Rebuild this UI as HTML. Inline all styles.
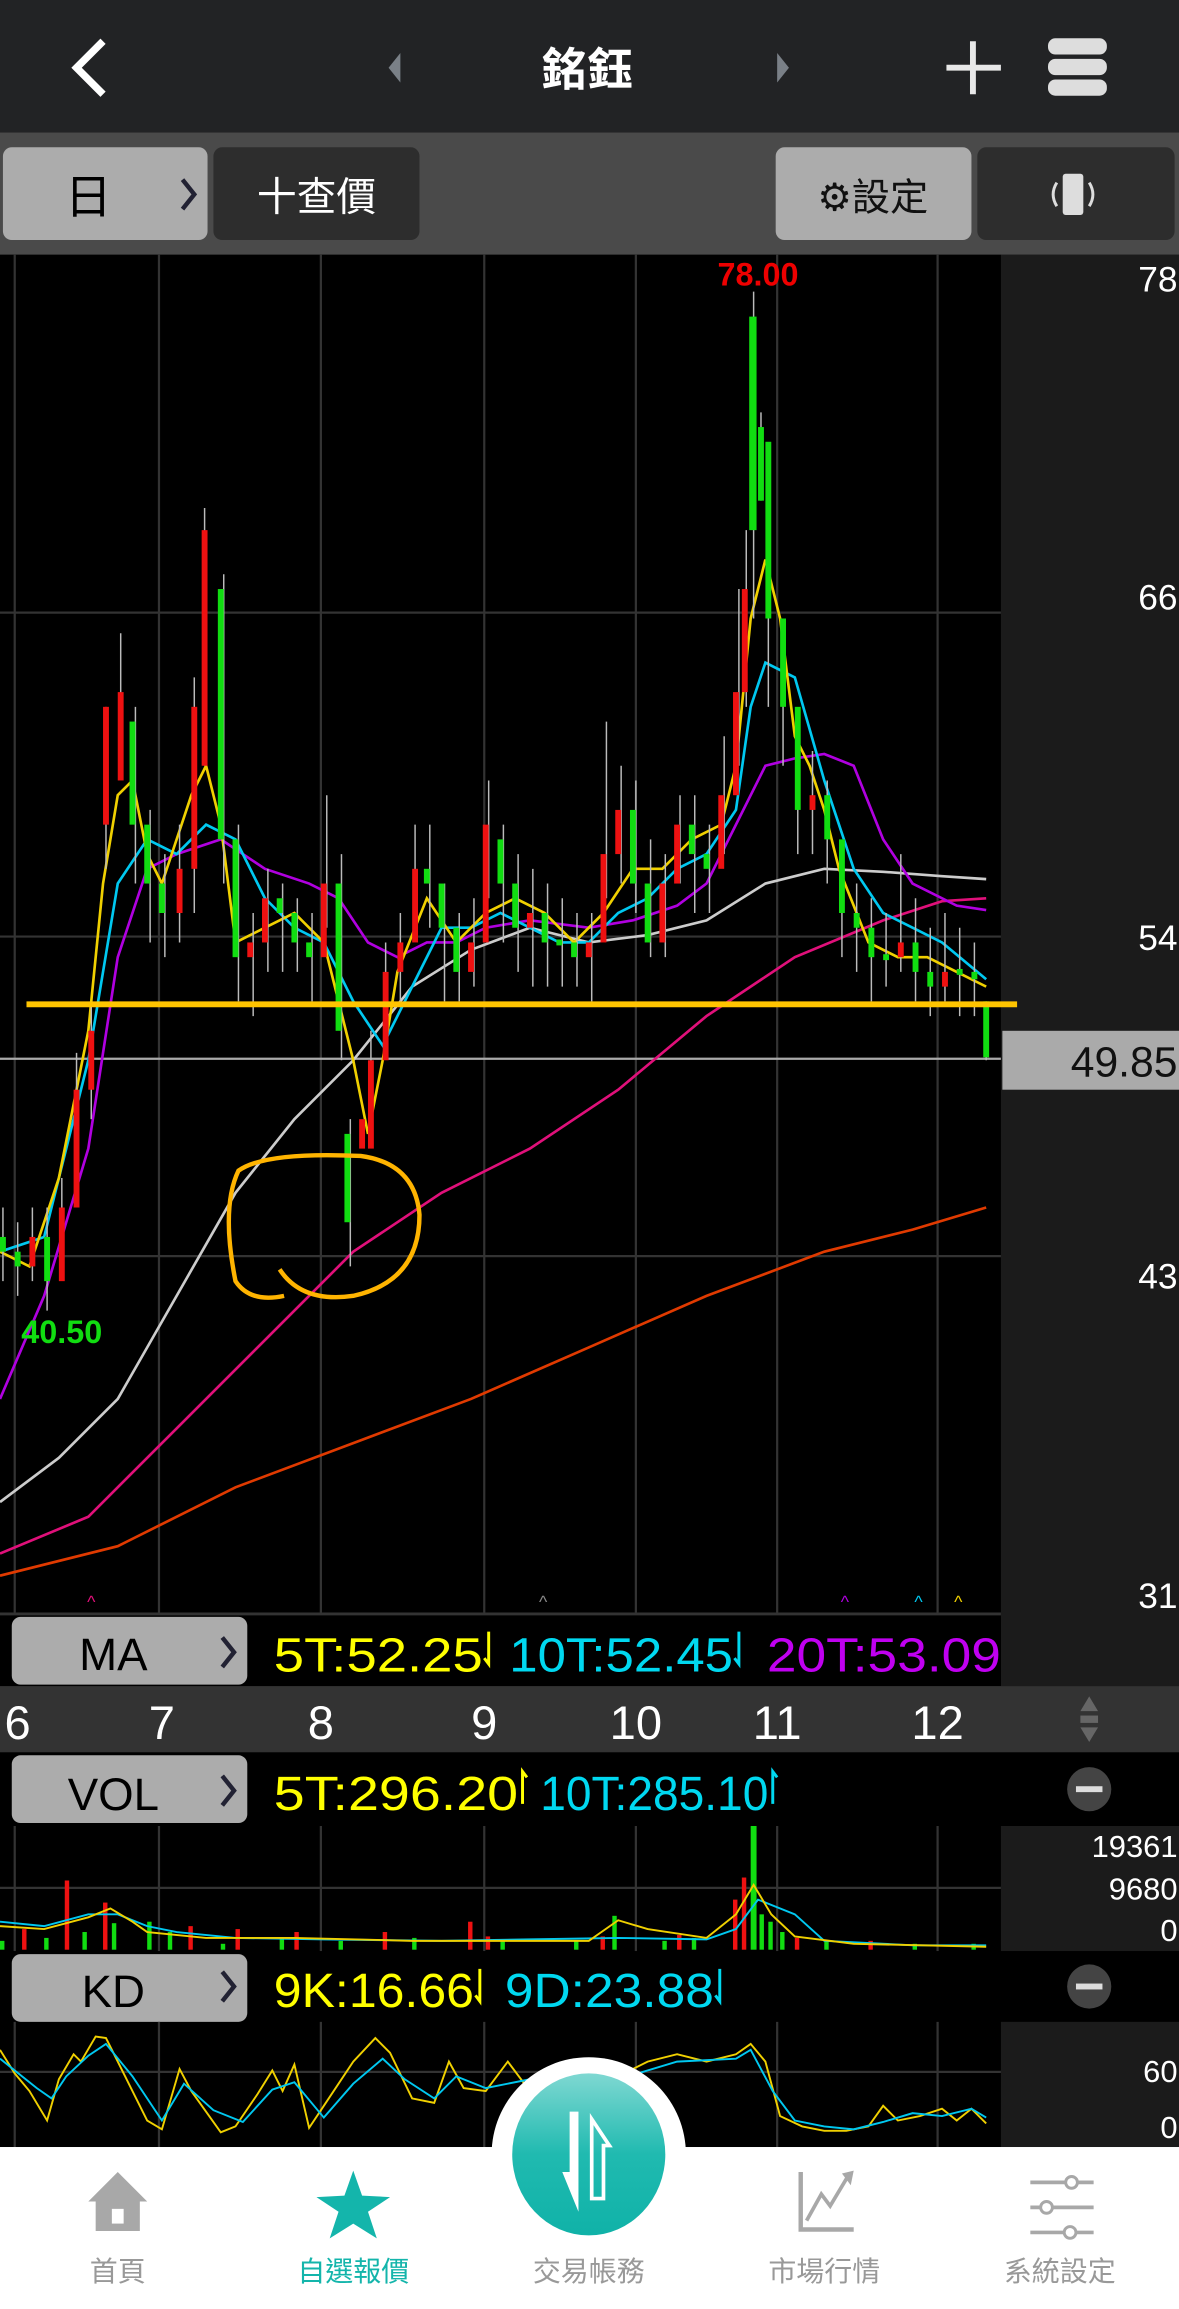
<!DOCTYPE html>
<html><head><meta charset="utf-8"><style>
html,body{margin:0;padding:0;background:#000;}
svg{display:block;}
text{font-family:"Liberation Sans","Noto Sans CJK TC",sans-serif;}
</style></head><body>
<svg width="1179" height="2309" viewBox="0 0 801 1568" preserveAspectRatio="none" xmlns="http://www.w3.org/2000/svg">
<!-- header -->
<rect x="0" y="0" width="801" height="90" fill="#222325"/>
<path d="M70 28 L52 46 L70 64" stroke="#fff" stroke-width="5" fill="none"/>
<path d="M272 36 L264 46 L272 56Z" fill="#7a8087"/>
<path d="M528 36 L536 46 L528 56Z" fill="#7a8087"/>
<text x="399" y="58" font-size="31" font-weight="bold" fill="#fff" text-anchor="middle">銘鈺</text>
<path d="M661 28 V64 M643 46 H680" stroke="#e8e8e8" stroke-width="4"/>
<rect x="712" y="26" width="40" height="11" rx="5" fill="#ddd"/>
<rect x="712" y="40" width="40" height="11" rx="5" fill="#ddd"/>
<rect x="712" y="54" width="40" height="11" rx="5" fill="#ddd"/>
<!-- toolbar -->
<rect x="0" y="90" width="801" height="83" fill="#4a4a4a"/>
<rect x="2" y="100" width="139" height="63" rx="6" fill="#acacac"/>
<text x="60" y="145" font-size="32" fill="#000" text-anchor="middle">日</text>
<path d="M124 122 L132 132 L124 142" stroke="#223" stroke-width="3" fill="none"/>
<rect x="145" y="100" width="140" height="63" rx="6" fill="#2d2d2d"/>
<text x="215" y="143" font-size="27" fill="#fff" text-anchor="middle">十查價</text>
<rect x="527" y="100" width="133" height="63" rx="6" fill="#acacac"/>
<text x="593" y="143" font-size="26" fill="#111" text-anchor="middle">⚙設定</text>
<rect x="664" y="100" width="134" height="63" rx="6" fill="#2d2d2d"/>
<rect x="722" y="118" width="14" height="28" rx="2" fill="#ddd"/>
<path d="M718 124 Q713 132 718 140 M740 124 Q745 132 740 140" stroke="#ddd" stroke-width="2" fill="none"/>
<!-- chart bg -->
<rect x="0" y="173" width="680" height="922" fill="#000"/>
<rect x="680" y="173" width="121" height="972" fill="#1b1b1b"/>
<g stroke="#333" stroke-width="1.5">
<path d="M10 173V1095 M108 173V1095 M218 173V1095 M329 173V1095 M432 173V1095 M528 173V1095 M637 173V1095"/>
<path d="M0 416H680 M0 636H680 M0 853H680"/>
</g>
<g fill="#fff" font-size="24" text-anchor="end">
<text x="800" y="198">78</text><text x="800" y="414">66</text><text x="800" y="645">54</text><text x="800" y="875">43</text><text x="800" y="1092">31</text>
</g>
<line x1="0" y1="719" x2="680" y2="719" stroke="#aaa" stroke-width="1.5"/>
<rect x="681" y="700" width="120" height="40" fill="#aaa"/>
<text x="800" y="731" font-size="29" fill="#111" text-anchor="end">49.85</text>
<!-- MAs -->
<g fill="none" stroke-width="1.8">
<polyline stroke="#e03a00" points="0,1070 80,1050 160,1010 240,980 320,950 400,915 480,880 560,850 620,835 670,820"/>
<polyline stroke="#e0107a" points="0,1055 60,1030 120,970 180,910 240,850 300,810 360,780 420,740 480,690 540,650 600,625 640,612 670,610"/>
<polyline stroke="#ccc" points="0,1020 40,990 80,950 120,880 160,810 200,760 240,720 280,670 320,645 360,630 400,640 440,635 480,625 520,600 560,590 600,592 640,595 670,597"/>
<polyline stroke="#b000e0" points="0,950 30,880 60,780 80,650 100,590 120,580 150,570 180,590 210,600 230,610 250,640 270,650 290,640 310,640 330,630 360,625 400,630 430,625 460,615 480,600 500,560 520,520 540,515 560,512 580,520 600,570 620,600 650,615 670,618"/>
<polyline stroke="#00c8f0" points="0,850 30,840 50,760 60,720 80,600 100,570 120,580 140,560 160,570 180,610 200,630 220,640 240,680 260,710 280,670 300,630 320,630 340,620 360,630 380,640 400,640 420,620 440,610 460,590 480,580 500,550 510,480 520,450 540,460 560,530 580,590 600,620 620,630 640,640 670,665"/>
<polyline stroke="#f0d000" points="0,850 20,860 40,800 60,700 70,600 80,540 90,530 100,580 110,600 120,570 130,540 140,520 150,560 160,640 180,630 200,620 220,640 240,720 250,770 260,720 270,660 290,610 310,640 330,620 350,610 370,620 390,640 410,620 430,590 450,590 470,570 490,560 500,520 510,420 520,380 530,420 540,500 550,520 560,550 570,590 590,640 610,650 630,650 650,660 670,670"/>
</g>
<!-- wicks -->
<path stroke="#bbb" stroke-width="1" d="M2 820V870 M12 830V880 M22 820V870 M32 820V890 M42 800V840 M52 715V760 M62 680V760 M72 480V590 M82 430V520 M92 480V600 M102 550V640 M112 580V650 M122 560V640 M132 460V620 M139 345V520 M152 390V600 M162 560V680 M172 620V690 M182 590V660 M192 600V660 M202 610V660 M212 620V680 M222 540V630 M232 580V720 M238 760V860 M252 700V760 M262 640V690 M272 620V680 M282 560V630 M292 560V630 M302 600V680 M312 620V680 M322 610V670 M332 530V610 M342 560V640 M352 580V660 M362 590V670 M372 600V670 M382 610V670 M392 620V670 M402 620V680 M412 490V610 M422 520V600 M432 530V620 M442 570V650 M452 580V650 M462 540V600 M472 540V620 M482 560V620 M492 500V580 M502 400V520 M507 360V480 M512 198V420 M517 280V340 M522 390V480 M532 450V520 M542 500V580 M552 510V580 M562 530V600 M572 580V650 M582 600V660 M592 610V680 M602 620V670 M612 580V660 M622 610V680 M632 630V690 M642 620V680 M652 630V690 M662 640V690 M670 680V720"/>
<!-- candles green -->
<g fill="#11dd11">
<rect x="0" y="840" width="4" height="10"/><rect x="10" y="850" width="4" height="10"/><rect x="30" y="840" width="4" height="30"/>
<rect x="88" y="490" width="4" height="70"/><rect x="98" y="560" width="4" height="40"/><rect x="108" y="600" width="4" height="20"/>
<rect x="148" y="400" width="4" height="170"/><rect x="158" y="570" width="4" height="80"/><rect x="188" y="610" width="4" height="10"/><rect x="198" y="620" width="4" height="20"/><rect x="208" y="640" width="4" height="10"/>
<rect x="228" y="600" width="4" height="100"/><rect x="234" y="770" width="4" height="60"/><rect x="288" y="590" width="4" height="10"/><rect x="298" y="600" width="4" height="30"/><rect x="308" y="630" width="4" height="30"/>
<rect x="338" y="570" width="4" height="30"/><rect x="348" y="600" width="4" height="30"/><rect x="368" y="620" width="4" height="20"/><rect x="378" y="638" width="4" height="4"/><rect x="388" y="640" width="4" height="10"/>
<rect x="428" y="550" width="4" height="50"/><rect x="438" y="600" width="4" height="40"/><rect x="468" y="560" width="4" height="20"/><rect x="478" y="580" width="4" height="10"/>
<rect x="509" y="215" width="5" height="145"/><rect x="515" y="290" width="4" height="50"/><rect x="520" y="300" width="4" height="120"/><rect x="530" y="420" width="4" height="60"/><rect x="540" y="480" width="4" height="70"/>
<rect x="560" y="540" width="4" height="30"/><rect x="570" y="570" width="4" height="50"/><rect x="580" y="620" width="4" height="10"/><rect x="590" y="630" width="4" height="20"/><rect x="600" y="648" width="4" height="4"/>
<rect x="620" y="640" width="4" height="20"/><rect x="630" y="660" width="4" height="10"/><rect x="650" y="658" width="4" height="4"/><rect x="660" y="660" width="4" height="5"/><rect x="668" y="680" width="4" height="38"/>
</g>
<g fill="#ee1111">
<rect x="20" y="840" width="4" height="20"/><rect x="40" y="820" width="4" height="50"/><rect x="50" y="740" width="4" height="80"/><rect x="60" y="700" width="4" height="40"/>
<rect x="70" y="480" width="4" height="80"/><rect x="80" y="470" width="4" height="60"/><rect x="120" y="590" width="4" height="30"/><rect x="130" y="480" width="4" height="110"/>
<rect x="137" y="360" width="4" height="160"/><rect x="168" y="640" width="4" height="10"/><rect x="178" y="610" width="4" height="30"/><rect x="218" y="600" width="4" height="50"/>
<rect x="244" y="760" width="4" height="20"/><rect x="250" y="720" width="4" height="60"/><rect x="260" y="660" width="4" height="60"/><rect x="270" y="640" width="4" height="20"/><rect x="280" y="590" width="4" height="50"/>
<rect x="318" y="640" width="4" height="20"/><rect x="328" y="560" width="4" height="80"/><rect x="358" y="620" width="4" height="10"/><rect x="398" y="640" width="4" height="10"/>
<rect x="408" y="580" width="4" height="60"/><rect x="418" y="550" width="4" height="30"/><rect x="448" y="600" width="4" height="40"/><rect x="458" y="560" width="4" height="40"/>
<rect x="488" y="540" width="4" height="50"/><rect x="498" y="470" width="4" height="70"/><rect x="504" y="400" width="4" height="70"/><rect x="550" y="540" width="4" height="10"/><rect x="610" y="640" width="4" height="10"/><rect x="640" y="660" width="4" height="10"/>
</g>
<!-- yellow line + circle -->
<line x1="18" y1="682" x2="691" y2="682" stroke="#ffc400" stroke-width="4"/>
<path d="M190 862 Q205 885 240 880 Q285 870 285 825 Q282 790 245 785 Q180 782 162 795 Q150 820 160 870 Q170 885 193 880" stroke="#ffb400" stroke-width="3" fill="none"/>
<text x="515" y="194" font-size="22" font-weight="bold" fill="#e00" text-anchor="middle">78.00</text>
<text x="42" y="912" font-size="22" font-weight="bold" fill="#1d1" text-anchor="middle">40.50</text>
<g font-size="12" text-anchor="middle"><text x="62" y="1092" fill="#e0107a">^</text><text x="369" y="1092" fill="#888">^</text><text x="574" y="1092" fill="#b000e0">^</text><text x="624" y="1092" fill="#00c8f0">^</text><text x="651" y="1092" fill="#f0d000">^</text></g>
<!-- MA row -->
<rect x="0" y="1095" width="680" height="50" fill="#000"/>
<line x1="0" y1="1096" x2="680" y2="1096" stroke="#333" stroke-width="2"/>
<rect x="8" y="1098" width="160" height="46" rx="6" fill="#acacac"/>
<text x="77" y="1134" font-size="31" fill="#000" text-anchor="middle">MA</text>
<path d="M151 1112 L159 1122 L151 1132" stroke="#223" stroke-width="3" fill="none"/>
<g font-size="33" lengthAdjust="spacingAndGlyphs">
<text x="186" y="1135" fill="#ffff00" textLength="142" lengthAdjust="spacingAndGlyphs">5T:52.25</text>
<path d="M332 1108 V1130 L329 1126" stroke="#ffff00" stroke-width="2" fill="none"/>
<text x="346" y="1135" fill="#00d8f0" textLength="152" lengthAdjust="spacingAndGlyphs">10T:52.45</text>
<path d="M502 1108 V1130 L499 1126" stroke="#00d8f0" stroke-width="2" fill="none"/>
<text x="521" y="1135" fill="#c000f0" textLength="159" lengthAdjust="spacingAndGlyphs">20T:53.09</text>
</g>
<!-- date row -->
<rect x="0" y="1145" width="801" height="45" fill="#333"/>
<g fill="#fff" font-size="32" text-anchor="middle"><text x="12" y="1181">6</text><text x="110" y="1181">7</text><text x="218" y="1181">8</text><text x="329" y="1181">9</text><text x="432" y="1181">10</text><text x="528" y="1181">11</text><text x="637" y="1181">12</text></g>
<path d="M734 1162 L740 1152 L746 1162Z M734 1173 L740 1183 L746 1173Z" fill="#666"/><rect x="734" y="1165" width="12" height="5" fill="#666"/>
<!-- VOL row -->
<rect x="0" y="1190" width="801" height="50" fill="#000"/>
<rect x="8" y="1192" width="160" height="46" rx="6" fill="#acacac"/>
<text x="77" y="1229" font-size="31" fill="#000" text-anchor="middle">VOL</text>
<path d="M151 1206 L159 1216 L151 1226" stroke="#223" stroke-width="3" fill="none"/>
<text x="186" y="1229" font-size="33" fill="#ffff00" textLength="166" lengthAdjust="spacingAndGlyphs">5T:296.20</text>
<path d="M355 1225 V1203 L358 1207" stroke="#ffff00" stroke-width="2" fill="none"/>
<text x="367" y="1229" font-size="33" fill="#00d8f0" textLength="155" lengthAdjust="spacingAndGlyphs">10T:285.10</text>
<path d="M525 1225 V1203 L528 1207" stroke="#00d8f0" stroke-width="2" fill="none"/>
<circle cx="740" cy="1215" r="15" fill="#444"/><rect x="731" y="1213" width="18" height="4" fill="#ddd"/>
<!-- VOL chart -->
<rect x="680" y="1240" width="121" height="85" fill="#1b1b1b"/>
<g stroke="#333" stroke-width="1.5"><path d="M10 1240V1325 M108 1240V1325 M218 1240V1325 M329 1240V1325 M432 1240V1325 M528 1240V1325 M637 1240V1325 M0 1282H680"/></g>
<g fill="#fff" font-size="21" text-anchor="end"><text x="800" y="1261">19361</text><text x="800" y="1290">9680</text><text x="800" y="1318">0</text></g>
<g fill="#ee1111"><rect x="44" y="1277" width="3" height="47"/><rect x="70" y="1292" width="3" height="32"/><rect x="15" y="1310" width="3" height="14"/><rect x="128" y="1308" width="3" height="16"/><rect x="160" y="1310" width="3" height="14"/><rect x="200" y="1312" width="3" height="12"/><rect x="260" y="1312" width="3" height="12"/><rect x="318" y="1305" width="3" height="19"/><rect x="330" y="1315" width="3" height="9"/><rect x="408" y="1315" width="3" height="9"/><rect x="460" y="1314" width="3" height="10"/><rect x="498" y="1290" width="3" height="34"/><rect x="504" y="1275" width="3" height="49"/><rect x="540" y="1316" width="3" height="8"/><rect x="590" y="1318" width="3" height="6"/></g>
<g fill="#11dd11"><rect x="0" y="1318" width="3" height="6"/><rect x="30" y="1316" width="3" height="8"/><rect x="56" y="1312" width="3" height="12"/><rect x="76" y="1306" width="3" height="18"/><rect x="100" y="1305" width="3" height="19"/><rect x="114" y="1312" width="3" height="12"/><rect x="150" y="1320" width="3" height="4"/><rect x="190" y="1316" width="3" height="8"/><rect x="230" y="1318" width="3" height="6"/><rect x="280" y="1316" width="3" height="8"/><rect x="340" y="1318" width="3" height="6"/><rect x="390" y="1318" width="3" height="6"/><rect x="416" y="1301" width="3" height="23"/><rect x="450" y="1318" width="3" height="6"/><rect x="470" y="1316" width="3" height="8"/><rect x="510" y="1240" width="4" height="84"/><rect x="516" y="1300" width="3" height="24"/><rect x="522" y="1305" width="3" height="19"/><rect x="530" y="1312" width="3" height="12"/><rect x="560" y="1318" width="3" height="6"/><rect x="620" y="1320" width="3" height="4"/><rect x="660" y="1320" width="3" height="4"/></g>
<g fill="none" stroke-width="1.3"><polyline stroke="#00c8f0" points="0,1305 30,1308 60,1300 80,1300 100,1308 120,1312 160,1316 220,1317 300,1318 360,1317 420,1316 480,1317 500,1310 515,1290 540,1300 560,1318 620,1321 670,1321"/><polyline stroke="#f0d000" points="0,1308 30,1310 60,1302 75,1296 90,1305 100,1312 140,1316 200,1316 280,1318 330,1318 360,1318 400,1318 420,1304 440,1310 480,1316 500,1300 512,1280 524,1300 540,1315 580,1320 670,1322"/></g>
<!-- KD row -->
<rect x="0" y="1325" width="801" height="48" fill="#000"/>
<rect x="8" y="1327" width="160" height="46" rx="6" fill="#acacac"/>
<text x="77" y="1363" font-size="31" fill="#000" text-anchor="middle">KD</text>
<path d="M151 1339 L159 1349 L151 1359" stroke="#223" stroke-width="3" fill="none"/>
<text x="186" y="1363" font-size="33" fill="#ffff00" textLength="136" lengthAdjust="spacingAndGlyphs">9K:16.66</text>
<path d="M326 1337 V1359 L323 1355" stroke="#ffff00" stroke-width="2" fill="none"/>
<text x="343" y="1363" font-size="33" fill="#00d8f0" textLength="142" lengthAdjust="spacingAndGlyphs">9D:23.88</text>
<path d="M489 1337 V1359 L486 1355" stroke="#00d8f0" stroke-width="2" fill="none"/>
<circle cx="740" cy="1349" r="15" fill="#444"/><rect x="731" y="1347" width="18" height="4" fill="#ddd"/>
<!-- KD chart -->
<rect x="680" y="1373" width="121" height="85" fill="#1b1b1b"/>
<g stroke="#333" stroke-width="1.5"><path d="M10 1373V1458 M108 1373V1458 M218 1373V1458 M329 1373V1458 M432 1373V1458 M528 1373V1458 M637 1373V1458 M0 1407H680"/></g>
<g fill="#fff" font-size="21" text-anchor="end"><text x="800" y="1414">60</text><text x="800" y="1452">0</text></g>
<g fill="none" stroke-width="1.3">
<polyline stroke="#f0d000" points="0,1392 10,1408 20,1420 32,1440 40,1412 50,1395 55,1400 65,1383 72,1384 85,1410 100,1440 110,1446 122,1405 130,1420 150,1448 160,1444 175,1422 185,1406 192,1420 200,1402 210,1445 220,1430 240,1400 255,1384 265,1394 280,1425 295,1428 305,1400 315,1418 330,1420 345,1400 360,1420 375,1414 395,1425 420,1410 440,1400 460,1395 480,1400 500,1395 510,1388 520,1400 530,1437 545,1444 560,1447 575,1447 590,1444 600,1430 610,1440 625,1437 640,1432 650,1440 660,1432 670,1442"/>
<polyline stroke="#00c8f0" points="0,1398 15,1410 25,1418 35,1425 45,1410 60,1396 72,1388 90,1410 110,1440 125,1415 145,1433 165,1441 185,1419 200,1414 220,1438 240,1415 260,1398 275,1412 295,1425 310,1410 330,1418 360,1412 390,1418 420,1412 460,1400 500,1398 510,1392 525,1420 540,1440 560,1444 580,1446 600,1441 620,1435 640,1437 660,1432 670,1438"/>
</g>
<!-- bottom bar -->
<rect x="0" y="1458" width="801" height="110" fill="#fff"/>
<ellipse cx="400" cy="1463" rx="66" ry="66" fill="#fff"/>
<defs><linearGradient id="tg" x1="0" y1="0" x2="0" y2="1"><stop offset="0" stop-color="#7fd8d2"/><stop offset="0.5" stop-color="#20bab0"/><stop offset="1" stop-color="#10b2a8"/></linearGradient></defs>
<ellipse cx="400" cy="1463" rx="52" ry="55" fill="url(#tg)"/>
<path d="M387 1434 V1475 H382 L393 1502 V1434Z" fill="#fff"/>
<path d="M402 1493 V1439 L414 1457 H410 V1493Z" stroke="#fff" stroke-width="2.5" fill="none"/>
<path d="M80 1475 L60 1495 H65 V1515 H95 V1495 H100Z" fill="#a8a8a8"/><rect x="76" y="1500" width="8" height="10" fill="#fff"/>
<path d="M240 1474 L246 1491 L265 1492 L250 1502 L256 1520 L240 1510 L224 1520 L230 1502 L215 1492 L234 1491Z" fill="#14b5ab"/>
<path d="M544 1475 V1514 H580" stroke="#a8a8a8" stroke-width="3" fill="none"/>
<path d="M548 1508 L558 1490 L564 1498 L576 1478" stroke="#a8a8a8" stroke-width="2.5" fill="none"/><path d="M572 1476 L580 1474 L578 1484Z" fill="#a8a8a8"/>
<path d="M700 1482 H743 M700 1499 H743 M700 1516 H743" stroke="#a8a8a8" stroke-width="2.5"/>
<circle cx="728" cy="1482" r="4" fill="#fff" stroke="#a8a8a8" stroke-width="2"/><circle cx="711" cy="1499" r="4" fill="#fff" stroke="#a8a8a8" stroke-width="2"/><circle cx="727" cy="1516" r="4" fill="#fff" stroke="#a8a8a8" stroke-width="2"/>
<g font-size="19" text-anchor="middle" fill="#999"><text x="80" y="1549">首頁</text><text x="240" y="1549" fill="#14b5ab">自選報價</text><text x="400" y="1549">交易帳務</text><text x="560" y="1549">市場行情</text><text x="720" y="1549">系統設定</text></g>
</svg>
</body></html>
